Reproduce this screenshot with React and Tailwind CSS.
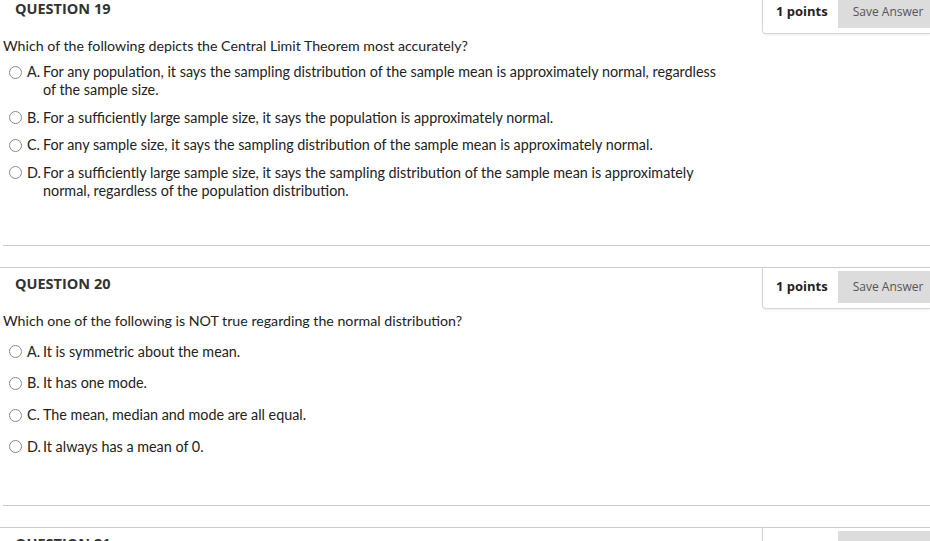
import React from "react";

const questions = [
  {
    num: 19,
    text: "Which of the following depicts the Central Limit Theorem most accurately?",
    options: [
      ["A.", "For any population, it says the sampling distribution of the sample mean is approximately normal, regardless of the sample size."],
      ["B.", "For a sufficiently large sample size, it says the population is approximately normal."],
      ["C.", "For any sample size, it says the sampling distribution of the sample mean is approximately normal."],
      ["D.", "For a sufficiently large sample size, it says the sampling distribution of the sample mean is approximately normal, regardless of the population distribution."],
    ],
    first: "mt-[8px]",
    gap: "gap-[9.5px]",
    bottom: "h-[45px]",
  },
  {
    num: 20,
    text: "Which one of the following is NOT true regarding the normal distribution?",
    options: [
      ["A.", "It is symmetric about the mean."],
      ["B.", "It has one mode."],
      ["C.", "The mean, median and mode are all equal."],
      ["D.", "It always has a mean of 0."],
    ],
    first: "mt-[13px]",
    gap: "gap-[13.8px]",
    bottom: "h-[49px]",
  },
];

function Header({ num }) {
  return (
    <div className="flex h-[41px] justify-between">
      <div
        className="whitespace-nowrap pl-[15px] pt-[6px] text-[14.5px] font-bold leading-[20px] text-[#333]"
        style={{ fontFamily: '"Open Sans", sans-serif' }}
      >
        QUESTION {num}
      </div>
      <div className="flex h-[42px] w-[168px] shrink-0 -mt-px overflow-hidden rounded-bl-[4px] border-b border-l border-[#d6d6d6] shadow-[0_1px_2px_rgba(0,0,0,0.08)]">
        <div
          className="mt-[4px] flex h-[32px] shrink-0 items-center whitespace-nowrap pl-[13px] pr-[10px] text-[13px] font-bold text-[#222]"
          style={{ fontFamily: '"Open Sans", sans-serif' }}
        >
          1 points
        </div>
        <div
          className="mt-[4px] flex h-[32px] shrink-0 items-center whitespace-nowrap bg-[#dcdcdc] px-[15px] text-[12px] text-[#555]"
          style={{ fontFamily: '"Open Sans", sans-serif' }}
        >
          Save Answer
        </div>
      </div>
    </div>
  );
}

function Question({ q }) {
  return (
    <div className="border-t border-[#cccccc]">
      <Header num={q.num} />
      <div className="pl-[3px] text-[14.2px] leading-[18px] text-[#222]" style={{ fontFamily: "Lato, sans-serif" }}>
        <div className="mt-[3px]">{q.text}</div>
        <div className={`flex flex-col text-[14.35px] ${q.first} ${q.gap}`}>
          {q.options.map(([l, t]) => (
            <div key={l} className="flex items-start">
              <span className="ml-[6px] mt-[2.5px] h-[13px] w-[13px] shrink-0 rounded-full border border-[#8a8a8a] bg-white" />
              <span className="ml-[5px] w-[16px] shrink-0 whitespace-nowrap">{l}</span>
              <span className="w-[680px]">{t}</span>
            </div>
          ))}
        </div>
      </div>
      <div className={q.bottom} />
      <div className="ml-[3px] border-t border-[#cccccc]" />
      <div className="h-[21px]" />
    </div>
  );
}

export default function App() {
  return (
    <div className="h-[541px] w-[930px] overflow-hidden bg-white">
      <div className="-mt-[8px]">
        {questions.map((q) => (
          <Question key={q.num} q={q} />
        ))}
        <div className="border-t border-[#cccccc]">
          <Header num={21} />
        </div>
      </div>
    </div>
  );
}
